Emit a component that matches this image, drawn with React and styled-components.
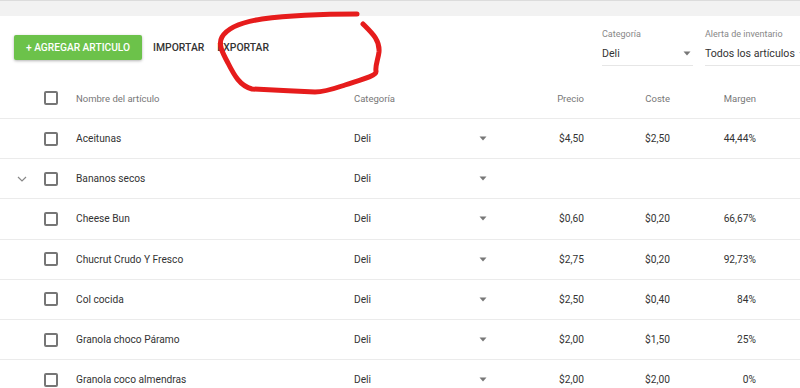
import styled, { createGlobalStyle } from 'styled-components';

const GlobalStyle = createGlobalStyle`
  html, body {
    margin: 0;
    padding: 0;
    background: #ffffff;
    overflow: hidden;
  }
  body {
    font-family: Roboto, 'Liberation Sans', Arial, sans-serif;
    color: #333333;
  }
`;

const items = [
  { name: 'Aceitunas', cat: 'Deli', price: '$4,50', cost: '$2,50', margin: '44,44%' },
  { name: 'Bananos secos', cat: 'Deli', expandable: true },
  { name: 'Cheese Bun', cat: 'Deli', price: '$0,60', cost: '$0,20', margin: '66,67%' },
  { name: 'Chucrut Crudo Y Fresco', cat: 'Deli', price: '$2,75', cost: '$0,20', margin: '92,73%' },
  { name: 'Col cocida', cat: 'Deli', price: '$2,50', cost: '$0,40', margin: '84%' },
  { name: 'Granola choco Páramo', cat: 'Deli', price: '$2,00', cost: '$1,50', margin: '25%' },
  { name: 'Granola coco almendras', cat: 'Deli', price: '$2,00', cost: '$2,00', margin: '0%' },
];

const Caret = () => (
  <svg width="8" height="5" viewBox="0 0 8 5">
    <path d="M0.5 0.5 L7.5 0.5 L4 4.5 Z" fill="#777" />
  </svg>
);

const Chevron = () => (
  <svg width="10" height="6" viewBox="0 0 10 6">
    <path d="M1 1 L5 5 L9 1" fill="none" stroke="#888" strokeWidth="1.2" />
  </svg>
);

const App = () => {
  return (
    <>
      <GlobalStyle />
      <Page>
        <TopBar />
        <Toolbar>
          <Actions>
            <AddButton>+ Agregar articulo</AddButton>
            <TextButton>Importar</TextButton>
            <TextButton>Exportar</TextButton>
          </Actions>
          <Filters>
            <Filter $width={91}>
              <FilterLabel>Categoría</FilterLabel>
              <FilterValue>
                <span>Deli</span>
                <Caret />
              </FilterValue>
            </Filter>
            <Filter $width={100}>
              <FilterLabel>Alerta de inventario</FilterLabel>
              <FilterValue>
                <span>Todos los artículos</span>
                <Caret />
              </FilterValue>
            </Filter>
          </Filters>
        </Toolbar>

        <Table>
          <HeaderRow>
            <Cell />
            <Cell>
              <Checkbox />
            </Cell>
            <HeadCell>Nombre del artículo</HeadCell>
            <HeadCell>Categoría</HeadCell>
            <HeadCell $right>Precio</HeadCell>
            <HeadCell $right>Coste</HeadCell>
            <HeadCell $right>Margen</HeadCell>
            <Cell />
          </HeaderRow>
          {items.map((item) => (
            <Row key={item.name}>
              <Cell $center>{item.expandable && <Chevron />}</Cell>
              <Cell>
                <Checkbox />
              </Cell>
              <Cell>{item.name}</Cell>
              <CategoryCell>
                <span>{item.cat}</span>
                <Caret />
              </CategoryCell>
              <Cell $right>{item.price}</Cell>
              <Cell $right>{item.cost}</Cell>
              <Cell $right>{item.margin}</Cell>
              <Cell />
            </Row>
          ))}
        </Table>

        <Scribble width="800" height="388" viewBox="0 0 800 388">
          <path
            d="M363 24 C372 33 380 40 379 52 C378 60 375 66 376 71 C377 76 360 80 345 85 C333 89 325 92 315 92 C295 91 270 90 252 89 C240 86 234 75 228 63 C222 52 218 44 222 37 C228 27 242 22 262 19 C285 16 310 14 357 14"
            fill="none"
            stroke="#e61c1c"
            strokeWidth="5"
            strokeLinecap="round"
            strokeLinejoin="round"
          />
        </Scribble>
      </Page>
    </>
  );
};

const Page = styled.div`
  position: relative;
  width: 800px;
  height: 388px;
  overflow: hidden;
  background: #fff;
`;

const TopBar = styled.div`
  height: 16px;
  background: #f2f2f2;
  border-top: 1px solid #dcdcdc;
  box-sizing: border-box;
`;

const Toolbar = styled.div`
  display: grid;
  grid-template-columns: 588px auto;
  height: 62px;
  padding-left: 14px;
`;

const Actions = styled.div`
  display: flex;
  align-items: center;
  gap: 9px;
  margin-top: 19px;
  height: 25px;
`;

const AddButton = styled.button`
  height: 25px;
  padding: 0 12px;
  border: none;
  border-radius: 2px;
  background: #6cc24a;
  color: #fff;
  font-family: Roboto, 'Liberation Sans', Arial, sans-serif;
  font-size: 10.2px;
  font-weight: 500;
  text-transform: uppercase;
  box-shadow: 0 1px 3px rgba(0, 0, 0, 0.3);
`;

const TextButton = styled.button`
  height: 25px;
  padding: 0 2px;
  border: none;
  background: transparent;
  color: #333;
  font-family: Roboto, 'Liberation Sans', Arial, sans-serif;
  font-size: 10.4px;
  font-weight: 500;
  text-transform: uppercase;
`;

const Filters = styled.div`
  display: flex;
  gap: 12px;
  padding-top: 12px;
`;

const Filter = styled.div`
  width: ${({ $width }) => $width}px;
  flex: 0 0 auto;
  display: flex;
  flex-direction: column;
`;

const FilterLabel = styled.div`
  font-size: 9px;
  color: #888;
  line-height: 12px;
`;

const FilterValue = styled.div`
  display: flex;
  align-items: center;
  justify-content: space-between;
  height: 24px;
  padding-top: 1px;
  font-size: 10.6px;
  color: #333;
  border-bottom: 1px solid #e6e6e6;
  padding-right: 2px;
  white-space: nowrap;
  gap: 4px;
`;

const Table = styled.div`
  display: flex;
  flex-direction: column;
`;

const columns = '44px 32px 278px 137px 93px 86px 86px 1fr';

const HeaderRow = styled.div`
  display: grid;
  grid-template-columns: ${columns};
  height: 41px;
  align-items: center;
  border-bottom: 1px solid #ebebeb;
  box-sizing: border-box;
`;

const Row = styled(HeaderRow)`
  height: 40.2px;
  color: #333;
`;

const Cell = styled.div`
  display: flex;
  align-items: center;
  justify-content: ${({ $right, $center }) =>
    $right ? 'flex-end' : $center ? 'center' : 'flex-start'};
  white-space: nowrap;
  font-size: 10.2px;
`;

const HeadCell = styled(Cell)`
  font-size: 9.5px;
  color: #777;
`;

const CategoryCell = styled(Cell)`
  justify-content: space-between;
  padding-right: 4px;
`;

const Checkbox = styled.span`
  display: inline-block;
  width: 14px;
  height: 14px;
  border: 2px solid #767676;
  border-radius: 2px;
  box-sizing: border-box;
`;

const Scribble = styled.svg`
  position: absolute;
  top: 0;
  left: 0;
  pointer-events: none;
`;

export default App;
